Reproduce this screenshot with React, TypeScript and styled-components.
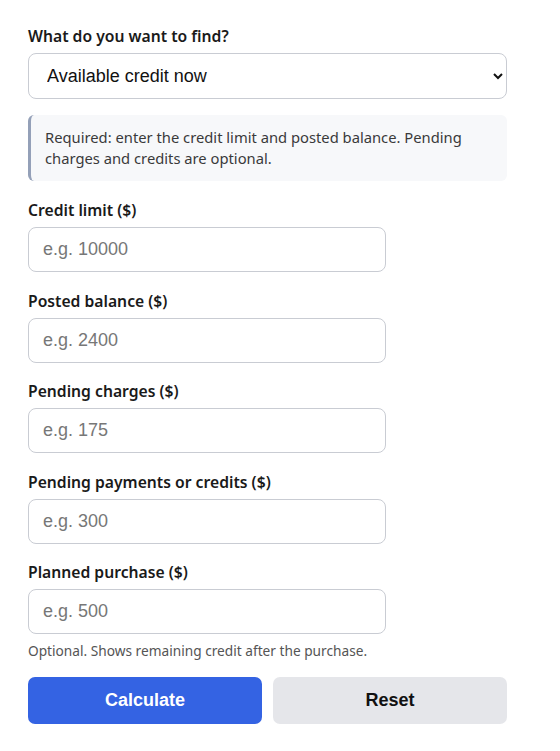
import styled, { createGlobalStyle } from "styled-components";

const GlobalStyle = createGlobalStyle`
  body {
    margin: 0;
    background: #ffffff;
    font-family: "Noto Sans", "Open Sans", sans-serif;
    color: #1a1a1a;
  }
`;

const Form = styled.form`
  width: 479px;
  padding: 24px 28px;
  display: flex;
  flex-direction: column;
`;

const Label = styled.label`
  display: block;
  font-size: 15.7px;
  line-height: 24px;
  font-weight: 600;
  color: #1a1a1a;
  margin-bottom: 5px;
`;

const Select = styled.select`
  width: 100%;
  height: 46px;
  padding: 0 12px 0 14px;
  font-family: "Liberation Sans", Arial, sans-serif;
  font-size: 18px;
  color: #111;
  background: #fff;
  border: 1px solid #c9ccd3;
  border-radius: 8px;
  box-sizing: border-box;
`;

const Note = styled.div`
  margin: 16px 0 17px;
  padding: 12px 14px 12px 14px;
  background: #f7f8fa;
  border-left: 3px solid #94a0b8;
  border-radius: 6px;
  font-size: 14.75px;
  line-height: 21px;
  color: #3a3a3a;
`;

const Field = styled.div<{ $last?: boolean }>`
  margin-bottom: ${({ $last }) => ($last ? "0" : "16.5px")};
`;

const Input = styled.input`
  display: block;
  width: 358px;
  height: 45px;
  padding: 0 14px;
  font-family: "Liberation Sans", Arial, sans-serif;
  font-size: 18px;
  color: #111;
  border: 1px solid #c9ccd3;
  border-radius: 8px;
  box-sizing: border-box;

  &::placeholder {
    color: #777;
  }
`;

const Help = styled.div`
  margin-top: 7px;
  font-size: 13.7px;
  line-height: 20px;
  color: #555;
`;

const Actions = styled.div`
  display: grid;
  grid-template-columns: 1fr 1fr;
  gap: 11px;
  margin-top: 16px;
`;

const Button = styled.button<{ $primary?: boolean }>`
  height: 47px;
  border: none;
  border-radius: 7px;
  font-family: "Liberation Sans", Arial, sans-serif;
  font-size: 18px;
  font-weight: 700;
  cursor: pointer;
  background: ${({ $primary }) => ($primary ? "#3463e3" : "#e5e6ea")};
  color: ${({ $primary }) => ($primary ? "#ffffff" : "#111111")};
`;

const fields = [
  { id: "limit", label: "Credit limit ($)", placeholder: "e.g. 10000" },
  { id: "balance", label: "Posted balance ($)", placeholder: "e.g. 2400" },
  { id: "charges", label: "Pending charges ($)", placeholder: "e.g. 175" },
  { id: "credits", label: "Pending payments or credits ($)", placeholder: "e.g. 300" },
  { id: "purchase", label: "Planned purchase ($)", placeholder: "e.g. 500" },
];

const App = () => {
  return (
    <>
      <GlobalStyle />
      <Form onSubmit={(e) => e.preventDefault()}>
        <Label htmlFor="mode">What do you want to find?</Label>
        <Select id="mode" defaultValue="available">
          <option value="available">Available credit now</option>
          <option value="utilization">Credit utilization</option>
        </Select>

        <Note>
          Required: enter the credit limit and posted balance. Pending charges and credits are
          optional.
        </Note>

        {fields.map((f, i) => (
          <Field key={f.id} $last={i === fields.length - 1}>
            <Label htmlFor={f.id}>{f.label}</Label>
            <Input id={f.id} type="text" inputMode="decimal" placeholder={f.placeholder} />
          </Field>
        ))}
        <Help>Optional. Shows remaining credit after the purchase.</Help>

        <Actions>
          <Button type="submit" $primary>
            Calculate
          </Button>
          <Button type="reset">Reset</Button>
        </Actions>
      </Form>
    </>
  );
};

export default App;
